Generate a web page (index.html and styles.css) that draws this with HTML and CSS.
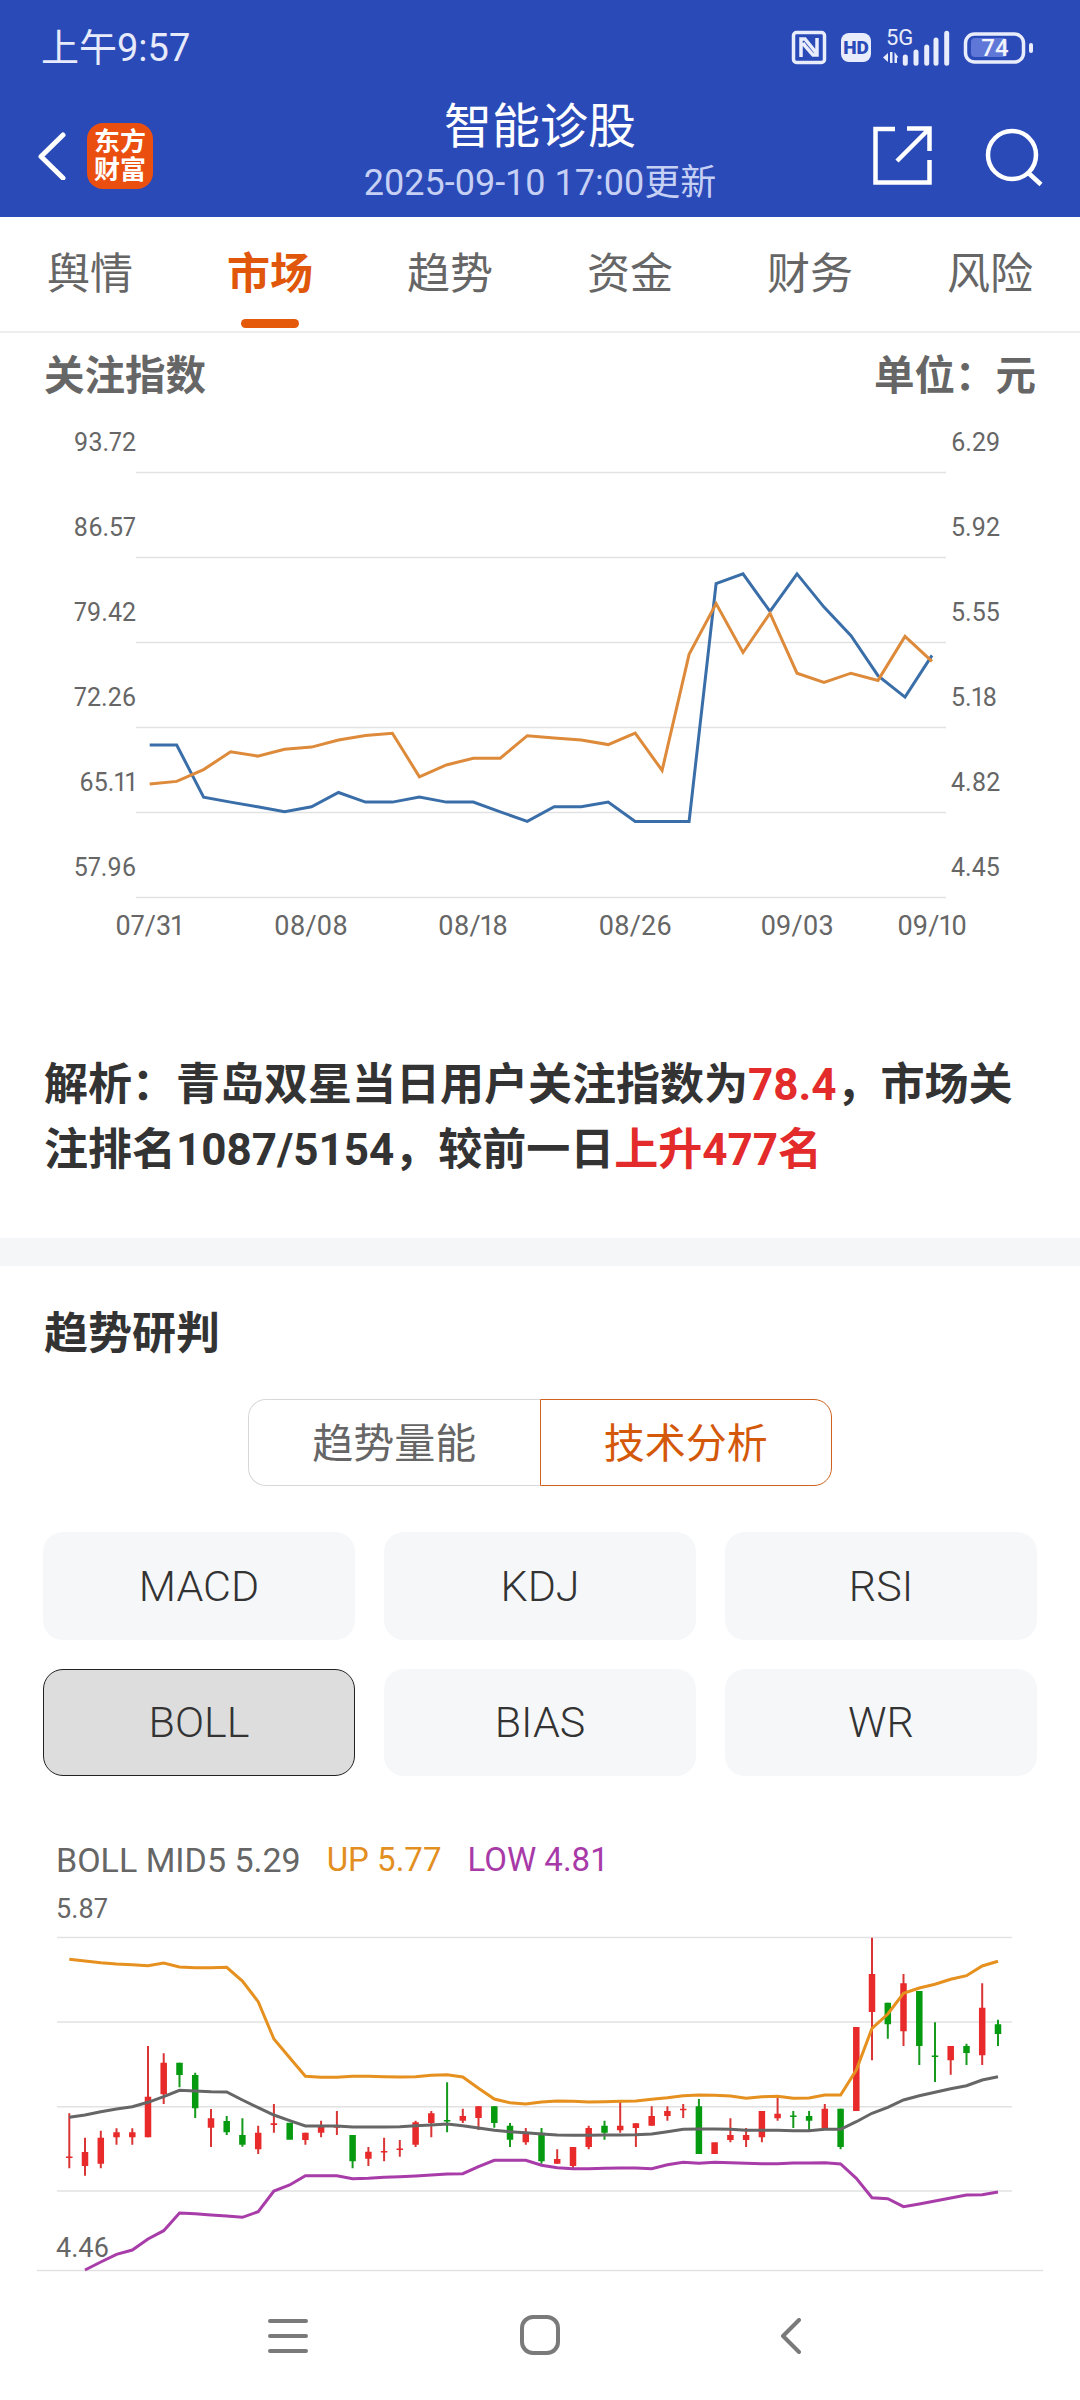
FILE: index.html
```html
<!DOCTYPE html>
<html lang="zh-CN">
<head>
<meta charset="utf-8">
<title>智能诊股</title>
<link rel="stylesheet" href="styles.css">
</head>
<body>
<div class="page">
  <header class="top">
    <div class="status">
      <span class="time">上午9:57</span>
      <svg class="status-icons" viewBox="780 26 260 42">
        <rect class="ic-line" x="793.5" y="32.5" width="31" height="30" rx="3"/>
        <path class="ic-thin" d="M801 57V39h4l9 11 3 4M817 38v17h-4l-8-9-2-3"/>
        <rect class="ic-fill" x="841" y="33" width="30" height="29" rx="8"/>
        <text class="ic-hd" x="856" y="54" text-anchor="middle">HD</text>
        <text class="ic-5g" x="886" y="45">5G</text>
        <path class="ic-fill" d="M883 57.5l5-4.500v9zM890 52h2.500v11H890zM894.500 52l4 5.500h-1.500V63h-2.500z"/>
        <path class="ic-bars" d="M905.300 63.300V57M916 63.300V52M926.700 63.300V47M936 63.300V40M946.700 63.300V33.300"/>
        <rect class="ic-batfill" x="971" y="38" width="36" height="19" rx="4"/>
        <rect class="ic-line" x="965.500" y="34" width="58" height="28" rx="9"/>
        <rect class="ic-fill" x="1029" y="43" width="4" height="10" rx="2"/>
        <text class="ic-batnum" x="995" y="56" text-anchor="middle">74</text>
      </svg>
    </div>
    <div class="appbar">
      <div class="appbar-left">
        <svg class="back" viewBox="0 0 30 48"><path d="M26 3L4 24.500L26 46"/></svg>
        <div class="logo"><span>东方</span><span>财富</span></div>
      </div>
      <div class="titles">
        <div class="title">智能诊股</div>
        <div class="subtitle">2025-09-10 17:00更新</div>
      </div>
      <div class="appbar-right">
        <svg class="hd-icon share" viewBox="0 0 60 60"><path d="M23 4H3.500V57.500H57.500V35M25 36L57 4M35 3.500H57.500V26"/></svg>
        <svg class="hd-icon search" viewBox="0 0 60 60"><circle cx="27" cy="28" r="24"/><path d="M44 46.500L56 57.500"/></svg>
      </div>
    </div>
  </header>

  <nav class="tabs">
    <div class="tab">舆情</div>
    <div class="tab tab-on">市场<i class="tab-bar"></i></div>
    <div class="tab">趋势</div>
    <div class="tab">资金</div>
    <div class="tab">财务</div>
    <div class="tab">风险</div>
  </nav>

  <section class="market">
    <div class="sec-head"><span>关注指数</span><span>单位&#xFF1A;元</span></div>
    <svg class="chart-a" viewBox="0 404 1080 646">
      <path class="grid" d="M136 472.500H946M136 557.500H946M136 642.500H946M136 727.500H946M136 812.500H946M136 897.500H946"/>
      <g class="axis-l">
        <text x="136" y="451">93.72</text><text x="136" y="536">86.57</text><text x="136" y="621">79.42</text><text x="136" y="706">72.26</text><text x="136" y="791">65.11</text><text x="136" y="876">57.96</text>
      </g>
      <g class="axis-r">
        <text x="951" y="451">6.29</text><text x="951" y="536">5.92</text><text x="951" y="621">5.55</text><text x="951" y="706">5.18</text><text x="951" y="791">4.82</text><text x="951" y="876">4.45</text>
      </g>
      <g class="axis-x">
        <text x="149" y="935">07/31</text><text x="311" y="935">08/08</text><text x="473" y="935">08/18</text><text x="635" y="935">08/26</text><text x="797" y="935">09/03</text><text x="932" y="935">09/10</text>
      </g>
      <polyline class="ln-blue" points="149.700,745 176.700,745 203.600,797.100 230.600,802.100 257.600,806.800 284.600,811.800 311.500,806.800 338.500,792.500 365.500,802.100 392.400,802.100 419.400,797.100 446.400,802.100 473.300,802.100 500.300,811.800 527.300,821.400 554.200,806.800 581.200,806.800 608.200,802.100 635.200,821.400 662.100,821.400 689.100,821.400 716.100,583.600 743,573.900 770,611.400 797,573.900 824,607.100 851,635.700 878,675.700 905,697.100 932,655.400"/>
      <polyline class="ln-orange" points="149.700,783.900 176.700,781.400 203.600,769.600 230.600,751.800 257.600,756.100 284.600,749.300 311.500,747.100 338.500,740 365.500,735.400 392.400,733.200 419.400,776.800 446.400,765 473.300,758.200 500.300,758.200 527.300,735.700 554.200,737.900 581.200,740 608.200,744.600 635.200,733.200 662.100,770.400 689.100,654.300 716.100,603.600 743,652.500 770,613.200 797,673.200 824,682.500 851,673.200 878,680.400 905,636.400 932,661.400"/>
    </svg>
    <p class="analysis">解析&#xFF1A;青岛双星当日用户关注指数为<em>78.4</em>&#xFF0C;市场关注排名1087/5154&#xFF0C;较前一日<em>上升477名</em></p>
  </section>

  <div class="band"></div>

  <section class="trend">
    <h2 class="sec-title">趋势研判</h2>
    <div class="seg">
      <div class="seg-item">趋势量能</div>
      <div class="seg-item seg-on">技术分析</div>
    </div>
    <div class="ind-grid">
      <div class="ind">MACD</div>
      <div class="ind">KDJ</div>
      <div class="ind">RSI</div>
      <div class="ind ind-on">BOLL</div>
      <div class="ind">BIAS</div>
      <div class="ind">WR</div>
    </div>
    <div class="legend">
      <span class="lg-mid">BOLL MID5 5.29</span>
      <span class="lg-up">UP 5.77</span>
      <span class="lg-low">LOW 4.81</span>
    </div>
    <svg class="chart-b" viewBox="0 1882 1080 390">
      <path class="grid" d="M57 1937.500H1012M57 2022H1012M57 2106.700H1012M57 2191H1012M37 2270.500H1043"/>
      <text class="axis-b" x="56" y="1918">5.87</text>
      <text class="axis-b" x="56" y="2257">4.46</text>
      <path class="wick-r" d="M69.300 2113.300V2168.300M85 2137.700V2175.700M100.800 2130.700V2168.300M116.500 2128.300V2144.700M132.300 2128.300V2144.700M148 2046V2137.300M163.700 2053.300V2104M211 2109V2147M258.200 2125.700V2154M273.900 2104V2132.700M305.400 2132.700V2144.700M321.100 2120.700V2137.300M336.900 2111V2135M368.400 2147V2166M384.100 2137.700V2161.300M399.800 2140V2156.700M415.600 2120.700V2147M431.300 2111V2137.300M462.800 2108.700V2123M478.500 2106.300V2130M525.800 2128V2144.700M557.200 2149.300V2163.700M573 2147V2168.300M588.700 2125.700V2149.300M620.200 2101.700V2132.700M635.900 2123.300V2147M651.700 2106.300V2125.700M667.400 2106.300V2120.700M683.200 2104V2118M730.400 2118.300V2142.300M746.100 2128V2147M761.900 2111V2142.300M777.600 2096.700V2120.700M824.800 2104V2128M872 1937.700V2060.300M903.500 1974V2046M950.700 2046V2074.700M982.200 1983.300V2065"/>
      <path class="body-r" d="M69.300 2156.500V2158M85 2152V2166M100.800 2137.700V2163.700M116.500 2132.300V2137.300M132.300 2132.300V2137.300M148 2096.700V2137.300M163.700 2062.700V2094.300M211 2118.300V2127.700M258.200 2132.700V2149.300M273.900 2123.300V2125M305.400 2132.700V2140M321.100 2125.700V2132.700M336.900 2125.700V2127.700M368.400 2151.700V2158.700M384.100 2151V2152.500M399.800 2148.500V2150M415.600 2122.300V2144.700M431.300 2113.300V2123M462.800 2116V2120.700M478.500 2106.300V2118M525.800 2132.700V2142.300M557.200 2159V2163.700M573 2147V2166M588.700 2128V2147M620.200 2125.700V2130.300M635.900 2123.300V2128M651.700 2116V2125.700M667.400 2111V2116M683.200 2108.700V2110.200M714.600 2142.300V2154M730.400 2135V2140M746.100 2135V2140M761.900 2111V2137.300M777.600 2113.700V2118.300M824.800 2108.700V2128M856.300 2027V2111M872 1974V2012M903.500 1983.300V2031.300M950.700 2046V2060.300M982.200 2007.700V2055.300"/>
      <path class="wick-g" d="M179.500 2062.700V2087.300M195.200 2072.700V2118M226.700 2116V2135M242.400 2118.300V2146.700M352.600 2135V2168.300M447.100 2082.300V2132.300M494.300 2106.300V2127.700M510 2123V2147M541.500 2128V2163.700M604.500 2120.700V2139.700M698.900 2099V2154M793.300 2111V2128M809.100 2111V2130.300M840.600 2108.700V2149.300M887.800 2002.700V2038.700M919.300 1991V2065M935 2022.300V2082M966.500 2043.700V2065M998 2019.700V2046"/>
      <path class="body-g" d="M179.500 2062.700V2075M195.200 2075V2108.300M226.700 2121V2132.300M242.400 2135V2144.700M289.700 2122.700V2139.700M352.600 2135V2161.300M447.100 2120V2121.500M494.300 2106.300V2123M510 2125.700V2139.700M541.500 2132.700V2161.300M604.500 2125.700V2132.700M698.900 2106.300V2154M793.300 2115.500V2117M809.100 2116V2120.700M840.600 2108.700V2147M887.800 2002.700V2024.300M919.300 1991V2046M935 2055.500V2057M966.500 2046V2053M998 2024.300V2034"/>
      <polyline class="ln-up" points="69.300,1959.300 85,1961 100.800,1962.700 116.500,1964 132.300,1964.700 148,1965.700 163.700,1963 179.500,1967 195.200,1967.700 211,1967.700 226.700,1967.300 242.400,1981 258.200,2001.700 273.900,2039 289.700,2057.700 305.400,2076.300 321.100,2077.300 336.900,2077.300 352.600,2076.300 368.400,2076.300 384.100,2076.700 399.800,2077 415.600,2076.700 431.300,2075.300 447.100,2074.700 462.800,2077 478.500,2088.300 494.300,2099 510,2102.700 525.800,2104 541.500,2102 557.200,2101 573,2101.300 588.700,2102 604.500,2101.700 620.200,2101.300 635.900,2101 651.700,2099.300 667.400,2097.700 683.200,2095.700 698.900,2095 714.600,2095.300 730.400,2096 746.100,2098.300 761.900,2096.700 777.600,2096.300 793.300,2098.300 809.100,2098 824.800,2095 840.600,2095 856.300,2070 872,2028.300 887.800,2014 903.500,1993.300 919.300,1988 935,1984.300 950.700,1979.300 966.500,1975.700 982.200,1966 998,1961.300"/>
      <polyline class="ln-mid" points="69.300,2117.300 85,2115 100.800,2111.700 116.500,2109 132.300,2106.700 148,2102.300 163.700,2096.700 179.500,2090.300 195.200,2091 211,2091.700 226.700,2092 242.400,2100 258.200,2107.700 273.900,2115 289.700,2120.700 305.400,2126 321.100,2126 336.900,2126 352.600,2127 368.400,2127 384.100,2127 399.800,2126.700 415.600,2125.700 431.300,2125 447.100,2124 462.800,2125.700 478.500,2128 494.300,2130.300 510,2131.700 525.800,2132.700 541.500,2134 557.200,2135 573,2135.300 588.700,2135.300 604.500,2135 620.200,2135 635.900,2134.700 651.700,2134 667.400,2131.700 683.200,2129.300 698.900,2129 714.600,2129 730.400,2129.300 746.100,2130.300 761.900,2130.300 777.600,2130.300 793.300,2130.700 809.100,2130.700 824.800,2129.300 840.600,2129.300 856.300,2121.700 872,2113.300 887.800,2107.300 903.500,2100 919.300,2095.700 935,2092.300 950.700,2088.700 966.500,2085.700 982.200,2080 998,2076.700"/>
      <polyline class="ln-low" points="85,2270 100.800,2262 116.500,2254.300 132.300,2250 148,2239 163.700,2230.700 179.500,2213 195.200,2213.700 211,2215 226.700,2216 242.400,2217.300 258.200,2211.700 273.900,2191 289.700,2185 305.400,2175.700 321.100,2175.700 336.900,2175.700 352.600,2178.700 368.400,2178.300 384.100,2177.300 399.800,2176.700 415.600,2176 431.300,2175 447.100,2174 462.800,2173.700 478.500,2166.700 494.300,2160.300 510,2160.300 525.800,2160.300 541.500,2165.300 557.200,2167.700 573,2168.700 588.700,2168.700 604.500,2168.300 620.200,2168 635.900,2168 651.700,2168.700 667.400,2164.700 683.200,2162.300 698.900,2163.300 714.600,2162.300 730.400,2162.700 746.100,2163.300 761.900,2163.700 777.600,2163.700 793.300,2163 809.100,2163 824.800,2162.700 840.600,2164 856.300,2178.300 872,2197.700 887.800,2198.700 903.500,2206.700 919.300,2204 935,2201 950.700,2198 966.500,2195 982.200,2194.700 998,2192"/>
    </svg>
  </section>

  <footer class="navbar">
    <svg class="nav-icon" viewBox="0 0 40 36"><path d="M2 3H38M2 18H38M2 33H38"/></svg>
    <svg class="nav-icon" viewBox="0 0 40 40"><rect x="2" y="2" width="36" height="36" rx="11"/></svg>
    <svg class="nav-icon" viewBox="0 0 20 36"><path d="M18 2L2 18L18 34"/></svg>
  </footer>
</div>
</body>
</html>
```

FILE: styles.css
```css
* { box-sizing: border-box; }
html, body { margin: 0; padding: 0; background: #fff; }
body { font-family: Roboto, "Noto Sans CJK SC", sans-serif; }
.page { width: 1080px; height: 2400px; overflow: hidden; display: flex; flex-direction: column; }

/* header */
.top { height: 217px; background: #2a4ab8; flex: none; }
.status { height: 92px; padding: 0 0 0 41px; display: flex; justify-content: space-between; align-items: center; }
.time { font-size: 38px; color: #e6eafa; line-height: 92px; padding-top: 3px; }
.status-icons { width: 260px; height: 42px; margin-right: 40px; margin-top: 2px; }
.ic-line { fill: none; stroke: #e8ecfb; stroke-width: 3.5; }
.ic-thin { fill: none; stroke: #e8ecfb; stroke-width: 3.5; }
.ic-fill { fill: #e8ecfb; }
.ic-hd { font: 900 19px Roboto, sans-serif; fill: #2a4ab8; }
.ic-5g { font: 400 22px Roboto, sans-serif; fill: #e8ecfb; }
.ic-bars { fill: none; stroke: #e8ecfb; stroke-width: 5; stroke-linecap: round; }
.ic-batfill { fill: #5f78d8; }
.ic-batnum { font: 500 24px Roboto, sans-serif; fill: #f2f4fd; }

.appbar { height: 125px; display: flex; align-items: flex-start; position: relative; justify-content: space-between; }
.appbar-left { display: flex; align-items: center; padding: 31px 0 0 37px; gap: 20px; }
.back { width: 30px; height: 48px; fill: none; stroke: #fff; stroke-width: 5; stroke-linecap: round; stroke-linejoin: round; }
.logo { width: 66px; height: 66px; border-radius: 16px; background: #ea4f10; display: flex; flex-direction: column; align-items: center; justify-content: center; color: #fff; font-size: 26px; font-weight: 700; line-height: 28px; }
.titles { position: absolute; left: 0; right: 0; top: 0; text-align: center; }
.title { font-size: 48px; line-height: 60px; color: #fff; font-family: "Noto Sans CJK SC", sans-serif; }
.subtitle { font-size: 36px; line-height: 50px; margin-top: 6px; color: #c6d0f4; }
.appbar-right { display: flex; gap: 53px; padding: 35px 35px 0 0; }
.hd-icon { width: 60px; height: 60px; fill: none; stroke: #fff; stroke-width: 4.5; }
.share { margin-top: -2px; }

/* tabs */
.tabs { height: 116px; flex: none; display: grid; grid-template-columns: repeat(6, 180px); border-bottom: 2px solid #eeeeee; }
.tab { display: flex; flex-direction: column; align-items: center; padding-top: 23px; font-size: 43px; line-height: 60px; color: #666; font-family: "Noto Sans CJK SC", sans-serif; }
.tab-on { color: #e0570b; font-weight: 700; }
.tab-bar { display: block; width: 58px; height: 9px; margin-top: 19px; border-radius: 5px; background: #e5590a; }

/* market */
.market { flex: none; height: 905px; }
.sec-head { display: flex; justify-content: space-between; padding: 12px 44px 0; font-size: 40.500px; line-height: 56px; height: 71px; font-weight: 700; color: #666; font-family: "Noto Sans CJK SC", sans-serif; }
.chart-a { display: block; width: 1080px; height: 646px; }
.grid { fill: none; stroke: #e2e2e2; stroke-width: 1.5; }
.axis-l text, .axis-r text, .axis-x text, .axis-b { font-family: Roboto, sans-serif; font-size: 25px; fill: #666; font-variant-numeric: proportional-nums; }
.axis-l text { text-anchor: end; }
.axis-x text { text-anchor: middle; font-size: 27px; }
.axis-b { font-size: 27px; }
.ln-blue { fill: none; stroke: #3a6ea9; stroke-width: 3; }
.ln-orange { fill: none; stroke: #dd8a3b; stroke-width: 3; }
.analysis { margin: 0; padding: 3px 40px 0 44px; font-size: 44px; line-height: 65px; font-weight: 700; color: #333; }
.analysis em { font-style: normal; color: #e32b2b; }

.band { height: 28px; flex: none; background: #f5f6f8; }

/* trend */
.trend { flex: none; height: 1006px; }
.sec-title { margin: 0; padding: 38px 0 0 44px; font-size: 44px; line-height: 60px; font-weight: 700; color: #333; }
.seg { width: 584px; height: 87px; margin: 35px auto 0; display: flex; font-size: 41px; color: #666; font-family: "Noto Sans CJK SC", sans-serif; }
.seg-item { flex: 1; display: flex; align-items: center; justify-content: center; padding-bottom: 5px; border: 1px solid #d8d8d8; border-right: 0; border-radius: 18px 0 0 18px; }
.seg-on { color: #d4580a; border: 1px solid #cf621c; border-radius: 0 18px 18px 0; }
.ind-grid { display: grid; grid-template-columns: repeat(3, 1fr); grid-auto-rows: 107.500px; gap: 29px; padding: 0 43px 0 43px; margin-top: 46px; }
.ind { display: flex; align-items: center; justify-content: center; border-radius: 20px; background: #f6f7f9; font-size: 43px; font-weight: 300; color: #333; }
.ind-on { background: #dddddd; border: 1px solid #222; }
.legend { display: flex; gap: 26px; padding: 0 0 0 56px; margin-top: 62px; font-size: 33px; line-height: 44px; }
.lg-mid { color: #666; font-size: 34px; }
.lg-up { color: #e38f1f; }
.lg-low { color: #a83aa8; }
.chart-b { display: block; width: 1080px; height: 390px; }
.wick-r, .wick-g, .body-r, .body-g { fill: none; }
.wick-r { stroke: #d93535; stroke-width: 2; }
.body-r { stroke: #e82a2a; stroke-width: 6.500; }
.wick-g { stroke: #169a1e; stroke-width: 2; }
.body-g { stroke: #069a10; stroke-width: 6.500; }
.ln-up { fill: none; stroke: #e5901f; stroke-width: 3; }
.ln-mid { fill: none; stroke: #666; stroke-width: 3; }
.ln-low { fill: none; stroke: #a83ca8; stroke-width: 3; }

/* nav */
.navbar { height: 128px; flex: none; background: #fff; position: relative; }
.nav-icon { position: absolute; fill: none; stroke: #7a7a7a; stroke-width: 4; stroke-linecap: round; stroke-linejoin: round; }
.nav-icon:nth-child(1) { left: 268px; top: 46px; width: 40px; height: 36px; }
.nav-icon:nth-child(2) { left: 520px; top: 43px; width: 40px; height: 40px; }
.nav-icon:nth-child(3) { left: 781px; top: 46px; width: 20px; height: 36px; }
```
